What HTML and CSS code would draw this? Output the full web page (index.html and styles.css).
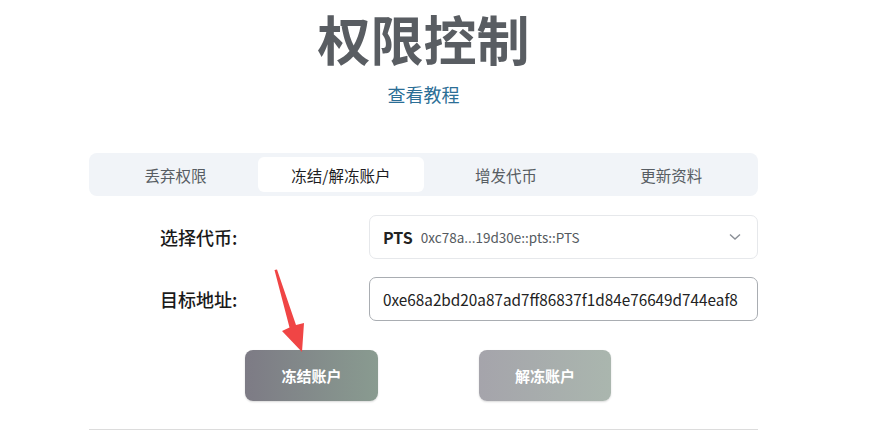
FILE: index.html
```html
<!DOCTYPE html>
<html lang="zh-CN">
<head>
<meta charset="utf-8">
<link rel="stylesheet" href="styles.css">
</head>
<body>
<div class="page">
  <h1 class="title">权限控制</h1>
  <div class="link-row"><a class="link" href="#">查看教程</a></div>
  <div class="tabs">
    <div class="tab">丢弃权限</div>
    <div class="tab active">冻结/解冻账户</div>
    <div class="tab">增发代币</div>
    <div class="tab">更新资料</div>
  </div>
  <div class="form">
    <div class="label">选择代币:</div>
    <div class="select">
      <span class="sym">PTS</span>
      <span class="addr">0xc78a...19d30e::pts::PTS</span>
      <svg class="chev" width="12" height="8" viewBox="0 0 12 8"><path d="M1 1.5 L6 6 L11 1.5" fill="none" stroke="#8a8f96" stroke-width="1.4"/></svg>
    </div>
    <div class="label">目标地址:</div>
    <div class="input">0xe68a2bd20a87ad7ff86837f1d84e76649d744eaf8</div>
  </div>
  <div class="actions">
    <button class="btn btn-freeze">冻结账户</button>
    <button class="btn btn-unfreeze">解冻账户</button>
  </div>
  <div class="rule"></div>
</div>
<svg class="arrow" width="875" height="431" viewBox="0 0 875 431">
  <polygon points="274.5,270 277,269.5 296,325 304,323 302,352 282,331 289.5,327.5" fill="#f04545"/>
</svg>
</body>
</html>
```
FILE: styles.css
```css
html, body {
  margin: 0;
  padding: 0;
  background: #ffffff;
}
body {
  font-family: "Noto Sans CJK SC", "Noto Sans", sans-serif;
  width: 875px;
  height: 431px;
  overflow: hidden;
  position: relative;
}
.page {
  width: 669px;
  margin-left: 89px;
  display: flex;
  flex-direction: column;
}
.title {
  margin: 0;
  padding-top: 4px;
  font-size: 53px;
  line-height: 68px;
  font-weight: 700;
  color: #595d62;
  text-align: center;
}
.link-row {
  text-align: center;
  margin-top: 8px;
  line-height: 28px;
}
.link {
  font-size: 18px;
  color: #2b6e96;
  text-decoration: none;
}
.tabs {
  margin-top: 44px;
  display: grid;
  grid-template-columns: repeat(4, 1fr);
  background: #f1f4f8;
  border-radius: 8px;
  padding: 4px;
  height: 35px;
}
.tab {
  display: flex;
  align-items: center;
  justify-content: center;
  font-size: 15.5px;
  color: #575d63;
  border-radius: 6px;
}
.tab.active {
  background: #ffffff;
  color: #1d1d1f;
}
.form {
  margin-top: 19px;
  display: grid;
  grid-template-columns: 280px 1fr;
  row-gap: 18px;
}
.label {
  display: flex;
  align-items: center;
  padding-left: 71px;
  font-size: 18px;
  font-weight: 500;
  color: #1a1a1a;
}
.select {
  height: 42px;
  border: 1px solid #e6e8eb;
  border-radius: 7px;
  display: flex;
  align-items: center;
  padding: 0 14px 0 13px;
}
.sym {
  font-size: 16px;
  font-weight: 700;
  color: #222;
}
.addr {
  margin-left: 8px;
  font-size: 13.5px;
  color: #555a60;
  flex: 1;
}
.chev {
  margin-right: 2px;
}
.input {
  height: 42px;
  border: 1px solid #a9adb2;
  border-radius: 7px;
  display: flex;
  align-items: center;
  padding-left: 13px;
  font-size: 15.3px;
  color: #222;
  white-space: nowrap;
  overflow: hidden;
}
.actions {
  margin-top: 29px;
  display: flex;
  padding-left: 156px;
  gap: 101px;
}
.btn {
  width: 133px;
  height: 51px;
  border: none;
  border-radius: 8px;
  font-family: "Noto Sans CJK SC", sans-serif;
  font-size: 15px;
  font-weight: 700;
  color: #ffffff;
  box-shadow: 0 1px 2px rgba(0,0,0,0.15);
}
.btn-freeze {
  background: linear-gradient(90deg, #7d7b85 0%, #899b90 100%);
}
.btn-unfreeze {
  width: 132px;
  background: linear-gradient(90deg, #a5a4ab 0%, #aab6ae 100%);
}
.rule {
  margin-top: 28px;
  height: 1px;
  background: #dcdcdc;
}
.arrow {
  position: absolute;
  left: 0;
  top: 0;
  pointer-events: none;
}
```
